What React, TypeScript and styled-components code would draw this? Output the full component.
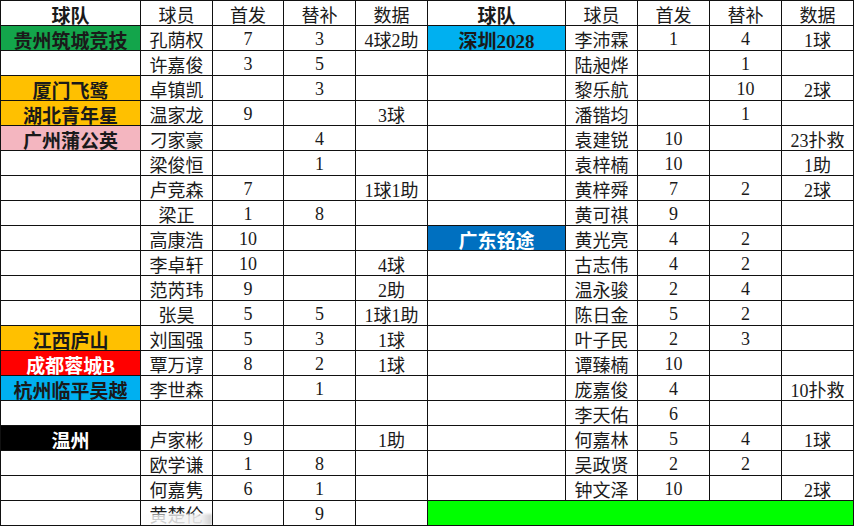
import styled, { createGlobalStyle } from 'styled-components'

const GlobalStyle = createGlobalStyle`
	html, body {
		margin: 0;
		padding: 0;
		background: #ffffff;
	}
`

const Sheet = styled.div`
	display: grid;
	grid-template-columns: 139px 71px 70px 71px 71px 137px 71px 71px 71px 71px;
	grid-auto-rows: 24px;
	gap: 1px;
	padding: 1px;
	width: max-content;
	background: #111;
	font-family: "Liberation Serif", "Noto Sans CJK SC", serif;
	font-size: 18px;
	color: #1a1a1a;
`

const Cell = styled.div<{ $bg?: string; $fg?: string; $bold?: boolean; $span?: number; $smudge?: boolean }>`
	position: relative;
	display: flex;
	align-items: center;
	justify-content: center;
	padding-top: 2px;
	box-sizing: border-box;
	overflow: hidden;
	white-space: nowrap;
	background: ${p => p.$bg || '#ffffff'};
	color: ${p => p.$fg || '#1a1a1a'};
	font-weight: ${p => (p.$bold ? 700 : 400)};
	font-size: ${p => (p.$bold ? '19px' : '18px')};
	grid-column: ${p => (p.$span ? `span ${p.$span}` : 'auto')};

	${p => p.$smudge && `
		&::after {
			content: '';
			position: absolute;
			left: 0;
			right: 0;
			bottom: 0;
			height: 11px;
			background: linear-gradient(to right, rgba(255,255,255,0.75), rgba(240,240,240,0.9) 85%, rgba(200,200,200,0.9));
			filter: blur(1px);
		}
	`}
`

type Team = { name: string; bg: string; fg: string }

const GREEN: Team = { name: '', bg: '#13a54b', fg: '#1a1a1a' }
const ORANGE = '#ffc000'
const SKY = '#00b0f0'

type Row = [Team | null, string, string, string, string]

const t = (name: string, bg: string, fg = '#1a1a1a'): Team => ({ name, bg, fg })

const leftRows: Row[] = [
	[{ ...GREEN, name: '贵州筑城竞技' }, '孔荫权', '7', '3', '4球2助'],
	[null, '许嘉俊', '3', '5', ''],
	[t('厦门飞鹭', ORANGE), '卓镇凯', '', '3', ''],
	[t('湖北青年星', ORANGE), '温家龙', '9', '', '3球'],
	[t('广州蒲公英', '#f4b6c0'), '刁家豪', '', '4', ''],
	[null, '梁俊恒', '', '1', ''],
	[null, '卢竞森', '7', '', '1球1助'],
	[null, '梁正', '1', '8', ''],
	[null, '高康浩', '10', '', ''],
	[null, '李卓轩', '10', '', '4球'],
	[null, '范芮玮', '9', '', '2助'],
	[null, '张昊', '5', '5', '1球1助'],
	[t('江西庐山', ORANGE), '刘国强', '5', '3', '1球'],
	[t('成都蓉城B', '#ff0000', '#ffffff'), '覃万谆', '8', '2', '1球'],
	[t('杭州临平吴越', SKY), '李世森', '', '1', ''],
	[null, '', '', '', ''],
	[t('温州', '#000000', '#ffffff'), '卢家彬', '9', '', '1助'],
	[null, '欧学谦', '1', '8', ''],
	[null, '何嘉隽', '6', '1', ''],
	[null, '黄楚伦', '', '9', ''],
]

const rightRows: (Row | 'fill')[] = [
	[t('深圳2028', SKY), '李沛霖', '1', '4', '1球'],
	[null, '陆昶烨', '', '1', ''],
	[null, '黎乐航', '', '10', '2球'],
	[null, '潘锴均', '', '1', ''],
	[null, '袁建锐', '10', '', '23扑救'],
	[null, '袁梓楠', '10', '', '1助'],
	[null, '黄梓舜', '7', '2', '2球'],
	[null, '黄可祺', '9', '', ''],
	[t('广东铭途', '#0070c0', '#ffffff'), '黄光亮', '4', '2', ''],
	[null, '古志伟', '4', '2', ''],
	[null, '温永骏', '2', '4', ''],
	[null, '陈日金', '5', '2', ''],
	[null, '叶子民', '2', '3', ''],
	[null, '谭臻楠', '10', '', ''],
	[null, '庞嘉俊', '4', '', '10扑救'],
	[null, '李天佑', '6', '', ''],
	[null, '何嘉林', '5', '4', '1球'],
	[null, '吴政贤', '2', '2', ''],
	[null, '钟文泽', '10', '', '2球'],
	'fill',
]

const Header = () => (
	<>
		<Cell $bold>球队</Cell>
		<Cell>球员</Cell>
		<Cell>首发</Cell>
		<Cell>替补</Cell>
		<Cell>数据</Cell>
	</>
)

const Half = ({ row, smudge }: { row: Row; smudge?: boolean }) => {
	const [team, player, start, sub, stats] = row
	return (
		<>
			<Cell $bold $bg={team?.bg} $fg={team?.fg}>{team?.name}</Cell>
			<Cell $smudge={smudge}>{player}</Cell>
			<Cell>{start}</Cell>
			<Cell>{sub}</Cell>
			<Cell>{stats}</Cell>
		</>
	)
}

const App = () => (
	<>
		<GlobalStyle />
		<Sheet>
			<Header />
			<Header />
			{leftRows.map((row, i) => {
				const right = rightRows[i]
				return (
					<div key={i} style={{ display: 'contents' }}>
						<Half row={row} smudge={i === leftRows.length - 1} />
						{right === 'fill'
							? <Cell $span={5} $bg="#00ff00" />
							: <Half row={right} />}
					</div>
				)
			})}
		</Sheet>
	</>
)

export default App
